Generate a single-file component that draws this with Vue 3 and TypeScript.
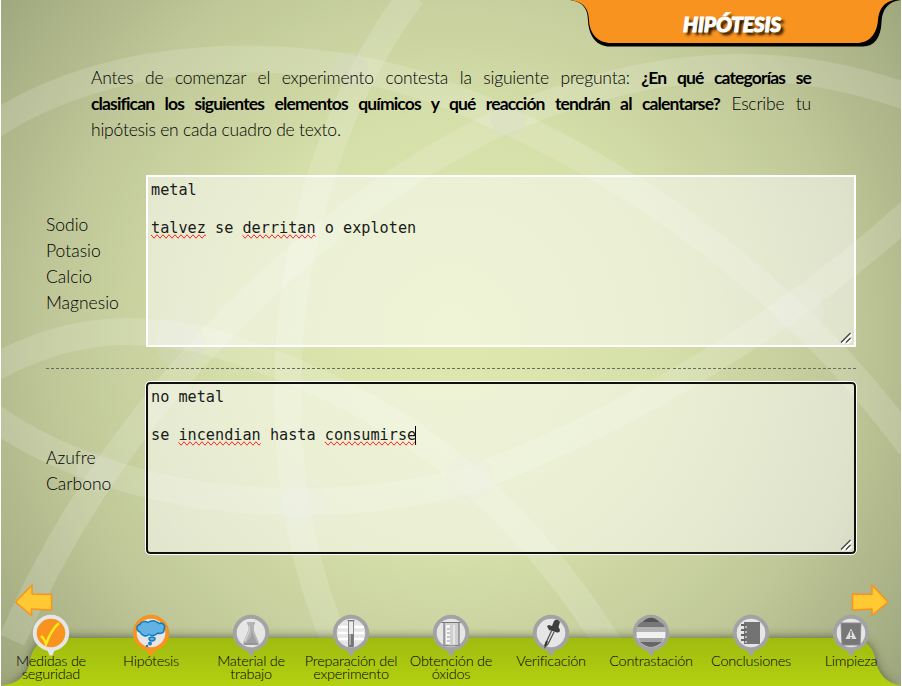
<script setup lang="ts">
interface Step {
  label: string[]
  state: 'done' | 'active' | 'idle'
  icon: string
}

const steps: Step[] = [
  { label: ['Medidas de', 'seguridad'], state: 'done', icon: 'check' },
  { label: ['Hipótesis'], state: 'active', icon: 'cloud' },
  { label: ['Material de', 'trabajo'], state: 'idle', icon: 'flask' },
  { label: ['Preparación del', 'experimento'], state: 'idle', icon: 'tube' },
  { label: ['Obtención de', 'óxidos'], state: 'idle', icon: 'beaker' },
  { label: ['Verificación'], state: 'idle', icon: 'dropper' },
  { label: ['Contrastación'], state: 'idle', icon: 'stripes' },
  { label: ['Conclusiones'], state: 'idle', icon: 'notebook' },
  { label: ['Limpieza'], state: 'idle', icon: 'bin' },
]

const ring: Record<Step['state'], string> = { done: '#e6e6e6', active: '#f7931e', idle: '#a3a3a3' }
const face: Record<Step['state'], string> = { done: '#f7931e', active: '#e6e6e6', idle: '#e6e6e6' }
</script>

<template>
  <main class="stage">
    <svg class="backdrop" viewBox="1 0 900 686" width="900" height="686" aria-hidden="true">
      <g class="orbits">
        <path d="M412 -5C325 110 285 270 288 400C289 510 310 580 338 650" />
        <path d="M-10 128C110 45 310 40 450 96C610 160 780 270 910 446" />
        <path d="M910 98C780 50 650 60 510 118C350 190 130 370 12 640" />
        <path d="M-10 370C70 325 140 325 210 342C370 390 500 470 612 650" />
        <path d="M-10 415C110 500 300 525 470 480C640 415 790 320 910 212" />
      </g>
      <g class="nodes">
        <circle cx="350" cy="70" r="18" />
        <circle cx="508" cy="118" r="18" />
        <circle cx="180" cy="342" r="25" />
        <circle cx="800" cy="311" r="24" />
        <circle cx="470" cy="478" r="24" />
        <circle cx="301" cy="503" r="25" />
        <circle cx="96" cy="472" r="20" />
      </g>
    </svg>

    <header class="top">
      <div class="tab">
        <svg class="tab-shape" viewBox="570 0 331 48" width="331" height="48" aria-hidden="true">
          <path d="M570 0C584 2 588 10 588 21C589 37 597 46.500 610 46.500H863C874 46.500 881 38 881.500 22C882 9 889 1 901 0Z" fill="#000" />
          <path d="M570 0C585 2 589 10 589 21C590 34 598 43 611 43H857C869 43 877 34 878 20C879 9 884 2 894 0Z" fill="#f7931e" />
        </svg>
        <h1 class="title">HIPÓTESIS</h1>
      </div>
    </header>

    <section class="intro">
      <div class="line spread">Antes de comenzar el experimento contesta la siguiente pregunta: <b>¿En qué categorías se</b></div>
      <div class="line spread"><b>clasifican los siguientes elementos químicos y qué reacción tendrán al calentarse?</b> Escribe tu</div>
      <div class="line">hipótesis en cada cuadro de texto.</div>
    </section>

    <section class="row">
      <div class="names"><span>Sodio</span><span>Potasio</span><span>Calcio</span><span>Magnesio</span></div>
      <div class="field">
        <p>metal</p>
        <p>&nbsp;</p>
        <p><span class="typo">talvez</span> se <span class="typo">derritan</span> o exploten</p>
        <svg class="grip" viewBox="0 0 12 12" width="12" height="12"><path d="M1.500 11L11 1.500M6.500 11L11 6.500" stroke="#fff" stroke-width="2" transform="translate(.8 .8)" /><path d="M1 10.500L10.500 1M6 10.500L10.500 6" stroke="#444" stroke-width="1.300" /></svg>
      </div>
    </section>

    <div class="divider"></div>

    <section class="row">
      <div class="names"><span>Azufre</span><span>Carbono</span></div>
      <div class="field focused">
        <p>no metal</p>
        <p>&nbsp;</p>
        <p>se <span class="typo">incendian</span> hasta <span class="typo">consumirse</span><i class="caret"></i></p>
        <svg class="grip" viewBox="0 0 12 12" width="12" height="12"><path d="M1.500 11L11 1.500M6.500 11L11 6.500" stroke="#fff" stroke-width="2" transform="translate(.8 .8)" /><path d="M1 10.500L10.500 1M6 10.500L10.500 6" stroke="#444" stroke-width="1.300" /></svg>
      </div>
    </section>

    <div class="arrows">
      <svg class="arrow" viewBox="0 0 40 36" width="40" height="36"><path d="M2.500 20L19 3V12L38.500 12.500V28L18.500 27V33.500Z" /></svg>
      <svg class="arrow" viewBox="0 0 40 36" width="40" height="36"><path d="M38 20L22 3V12.500L2.500 12V28L22 27V33.500Z" /></svg>
    </div>

    <svg class="ground" viewBox="1 600 900 86" width="900" height="86" aria-hidden="true">
      <defs>
        <linearGradient id="grass" x1="0" y1="0" x2="0" y2="1">
          <stop offset="0" stop-color="#a0bb10" />
          <stop offset="1" stop-color="#b3d110" />
        </linearGradient>
        <filter id="soft" x="-5%" y="-60%" width="110%" height="220%"><feGaussianBlur stdDeviation="5" /></filter>
      </defs>
      <path class="ground-shade" d="M1 686C20 683 28 674 30 661C32 645 42 637 54 637H848C864 637 873 646 875 658C878 674 886 683 901 686Z" filter="url(#soft)" />
      <path d="M1 686C20 683 28 674 30 661C32 647 42 638 54 638H848C864 638 873 646 875 658C878 674 886 683 901 686Z" fill="url(#grass)" />
    </svg>

    <nav class="steps">
      <a v-for="step in steps" :key="step.icon" class="step">
        <svg class="pin" viewBox="0 0 38 42" width="38" height="42">
          <path d="M15 35L17.500 41.500H20.500L23 35Z" :fill="ring[step.state]" />
          <circle cx="19" cy="19" r="18.200" :fill="ring[step.state]" />
          <circle cx="19" cy="19" r="14.300" :fill="face[step.state]" />
          <path v-if="step.icon === 'check'" d="M9 22Q12 24 14 30Q19 16 27 9" fill="none" stroke="#ffea1f" stroke-width="2.400" />
          <g v-else-if="step.icon === 'cloud'" fill="#62b3e4" stroke="#147cc1" stroke-width="1.500">
            <path d="M8 18C4 17 4 11 8 10.500C9 7 14 7 16 8.500C20 5.500 25 7 27 9.500C31 8 34 12 32 15C33 19 28 20 26 19C23 22 19 22 17 20.500C14 23 10 22 8 18Z" />
            <path d="M17 24Q20 22 23 24Q23 27 20 27Q17 27 17 24Z" /><circle cx="18" cy="29.500" r="1.200" /><circle cx="15" cy="32" r=".5" />
          </g>
          <g v-else-if="step.icon === 'flask'">
            <path d="M15 8H23V10L22 11V17L27 29Q27 31 25 31H13Q11 31 11 29L16 17V11L15 10Z" fill="#b5b5b5" />
            <path d="M20 10V18L25 29H14L19 22Z" fill="#a0a0a0" /><path d="M17 12V18L13 27" stroke="#dedede" fill="none" /><path d="M12 30H26" stroke="#777" />
          </g>
          <g v-else-if="step.icon === 'tube'">
            <path d="M6 13H32M6 19H32M6 25H32" stroke="#fff" stroke-width="2.500" />
            <path d="M16.500 7H21.500V32H16.500Z" fill="#eee" stroke="#8b8b8b" /><path d="M16.500 20H21.500V33H16.500Z" fill="#777" /><path d="M18 8V31" stroke="#e3e3e3" /><path d="M15.500 6.500H22.500" stroke="#777" />
          </g>
          <g v-else-if="step.icon === 'beaker'">
            <path d="M12 9H27V31Q19 33 12 31Z" fill="#cfcfcf" /><path d="M14 11H18V30H14Z" fill="#f5f5f5" />
            <path d="M9.500 8.500H28.500M12 9V31Q19 33 27 31V9" fill="none" stroke="#777" stroke-width="1.200" /><path d="M15 15H18M15 19H18M15 23H18M15 27H18" stroke="#999" /><path d="M22 11V30" stroke="#e6e6e6" stroke-width="2" />
          </g>
          <g v-else-if="step.icon === 'dropper'">
            <path d="M19.500 17L14 29L13 33L16 30L22 18" fill="#eee" stroke="#555" stroke-width="1.300" />
            <path d="M16 14Q14 11.500 17 11L20 12L22 7Q25 4 28 8L26.500 13L28 16Q28 19 25 18.500L17 16Z" fill="#3e3e3e" /><path d="M13 32L15 27" stroke="#333" stroke-width="2" />
          </g>
          <g v-else-if="step.icon === 'stripes'">
            <path d="M9.500 8.500Q19 -1 28.500 8.500Z" fill="#555" /><path d="M5 13Q8 8 10 8H28Q31 9 33 13Z" fill="#777" />
            <path d="M4.700 13H33.300V18H4.700Z" fill="#b3b3b3" /><path d="M4.700 18H33.300V24H4.700Z" fill="#f0f0f0" />
            <path d="M6 24H32L30 28H8Z" fill="#a3a3a3" /><path d="M8 28H30Q19 38 8 28Z" fill="#666" />
          </g>
          <g v-else-if="step.icon === 'notebook'">
            <path d="M12 8H28V30H12Z" fill="#737373" /><path d="M9 11H14M9 16H14M9 21H14M9 26H14" stroke="#666" stroke-width="2" /><path d="M14 12V14M14 17V19M14 22V24M14 27V29" stroke="#ddd" stroke-width="1.300" />
          </g>
          <g v-else>
            <path d="M9 9H29L28 31H10Z" fill="#777" stroke="#8b8b8b" /><path d="M19 14.500L24.500 25H13.500Z" fill="#ddd" /><path d="M19 17V22M19 23V25" stroke="#777" stroke-width="1.500" />
          </g>
        </svg>
        <span class="label"><span v-for="part in step.label" :key="part">{{ part }}</span></span>
      </a>
    </nav>
  </main>
</template>

<style>
body {
  margin: 0;
  background: #fff;
  overflow: hidden;
}
</style>

<style scoped>
.stage {
  position: relative;
  isolation: isolate;
  box-sizing: border-box;
  width: 900px;
  height: 686px;
  margin: 0 auto;
  overflow: hidden;
  font-family: Lato, "Open Sans", sans-serif;
  font-weight: 300;
  color: #000;
  background: radial-gradient(circle 575px at 450px 335px, #dfe9ae 0%, #d5dfa9 38%, #bfc798 70%, #9ca47b 100%);
}
.backdrop { position: absolute; inset: 0; z-index: -1; }
.orbits path { fill: none; stroke: #fff; stroke-opacity: .15; stroke-width: 27; }
.nodes circle { fill: #d3d6c8; fill-opacity: .28; }
.top { display: flex; justify-content: flex-end; height: 48px; }
.tab { position: relative; width: 331px; height: 48px; }
.tab-shape { display: block; }
.title {
  position: absolute;
  top: 9px;
  left: 113px;
  margin: 0;
  font-size: 21px;
  line-height: 30px;
  font-weight: 900;
  font-style: italic;
  color: #fff;
  letter-spacing: -.2px;
  -webkit-text-stroke: 1px #fff;
  text-shadow: 3px 3px 3px #000;
}
.intro { width: 720px; margin: 17px 0 0 90px; font-size: 17.500px; }
.line { height: 26px; line-height: 26px; white-space: nowrap; letter-spacing: -.220px; }
.spread { text-align: justify; text-align-last: justify; }
.line b { font-weight: 700; letter-spacing: -.85px; }
.row { display: flex; width: 810px; margin-left: 45px; align-items: center; }
.intro + .row { margin-top: 32px; }
.names { display: flex; flex-direction: column; width: 100px; padding-top: 5px; font-size: 17.500px; line-height: 26px; letter-spacing: 0; }
.field {
  position: relative;
  box-sizing: border-box;
  width: 710px;
  height: 172px;
  padding: 4px 3px;
  border: 2px solid #fff;
  background: rgba(255, 255, 255, .5);
  color: #1a1a1a;
  font: 400 15.200px/19px "DejaVu Sans Mono", monospace;
}
.field p { height: 19px; margin: 0; white-space: pre; }
.focused { border-color: #101010; border-radius: 4px; outline: 1px solid #fff; }
.typo { text-decoration: spelling-error; }
.caret { display: inline-block; width: 1px; height: 19px; margin-left: -1px; vertical-align: top; background: #000; }
.grip { position: absolute; right: 2px; bottom: 1px; fill: none; }
.divider {
  width: 810px;
  height: 1px;
  margin: 21px 0 13px 45px;
  background: repeating-linear-gradient(90deg, #6b6d62 0 3px, transparent 3px 5.012px);
}
.arrows { display: flex; justify-content: space-between; margin: 28px 11px 0 12px; }
.arrow path { fill: #ffc933; stroke: #f7931e; stroke-width: 1.500; stroke-linejoin: round; }
.ground { position: absolute; left: 0; bottom: 0; z-index: -1; }
.ground-shade { fill: #3d4328; fill-opacity: .7; }
.steps { display: grid; grid-template-columns: repeat(9, 100px); margin-top: -4px; }
.step { display: flex; flex-direction: column; align-items: center; }
.pin { display: block; }
.label { display: flex; flex-direction: column; align-items: center; margin-top: -2px; font-size: 14.500px; line-height: 13px; white-space: nowrap; letter-spacing: -.25px; }
</style>
